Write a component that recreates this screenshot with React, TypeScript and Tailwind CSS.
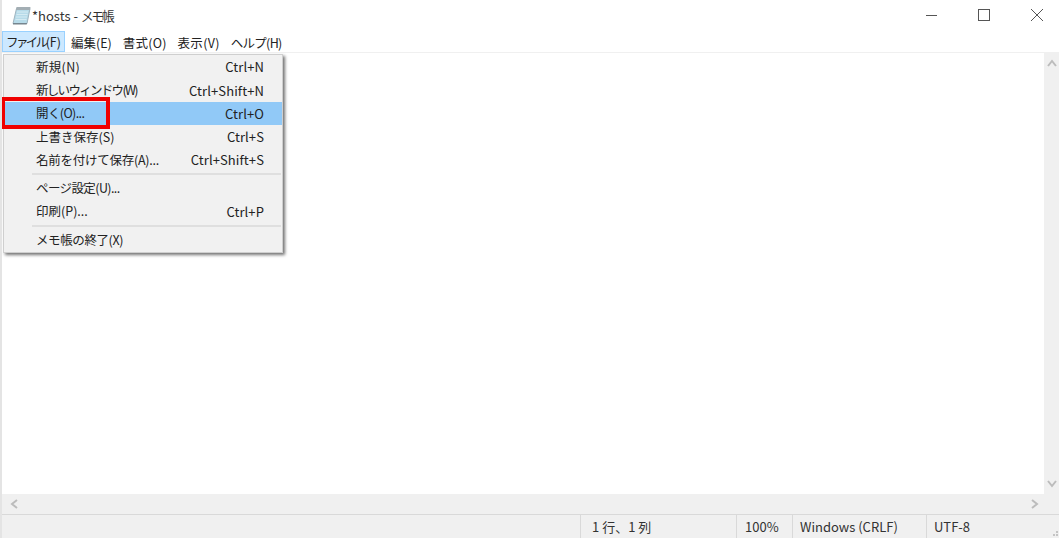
import React from "react";

const FONT = "font-['Noto_Sans_CJK_JP','Noto_Sans',sans-serif]";

function NotepadIcon() {
  return (
    <svg width="19" height="19" viewBox="0 0 19 19" className="shrink-0">
      <path d="M4.5 2.5 L18 2.5 L15 17.5 L1 17.5 Z" fill="#b7dbe9" stroke="#9fb4bf" strokeWidth="1" />
      <path d="M5 6 L16 6 M4.5 8.5 L15.5 8.5 M4 11 L15 11 M3.5 13.5 L14.5 13.5" stroke="#d5ebf3" strokeWidth="1" />
      <path d="M4.5 1 L18.5 1 L18 4 L4 4 Z" fill="#a3aeb4" />
      <path d="M1 17 L15 17 L14.7 18.5 L1 18.5 Z" fill="#76858e" />
    </svg>
  );
}

function Caret({ d }: { d: string }) {
  return (
    <svg width="10" height="8" viewBox="0 0 10 8" className="block">
      <path d={d} fill="none" stroke="#bcbcbc" strokeWidth="2" />
    </svg>
  );
}

function MenuRow({ label, shortcut, active, tracking }: { label: string; shortcut?: string; active?: boolean; tracking?: string }) {
  return (
    <div className={`flex h-[23.25px] items-center justify-between pl-[31px] pr-[18px] ${active ? "bg-[#91c9f7]" : ""}`}>
      <span className={tracking}>{label}</span>
      {shortcut && <span className="text-[13px] tracking-[0.1px]">{shortcut}</span>}
    </div>
  );
}

function Separator() {
  return <div className="my-[1.5px] ml-[27px] mr-[1px] h-[2px] bg-[#dfdfdf]" />;
}

export default function App() {
  return (
    <div className={`${FONT} relative flex h-[538px] w-[1059px] flex-col overflow-hidden border-l-2 border-[#e4e4e4] bg-white text-[12.5px] text-[#222]`}>
      {/* Title bar */}
      <div className="flex h-[31px] shrink-0 items-center justify-between pl-[10px]">
        <div className="flex items-center gap-[1px] text-[13px] text-[#333]">
          <NotepadIcon />
          <span>
            *hosts - <span className="tracking-[-2.6px]">メモ帳</span>
          </span>
        </div>
        <div className="flex items-center gap-[40px] pb-[2px] pr-[15px]">
          <svg width="14" height="14" viewBox="0 0 14 14"><path d="M2 7.5 H13" stroke="#555" /></svg>
          <div className="h-[12px] w-[12px] border border-[#555]" />
          <svg width="14" height="14" viewBox="0 0 14 14"><path d="M1 1 L13 13 M13 1 L1 13" stroke="#555" /></svg>
        </div>
      </div>

      {/* Menu bar */}
      <div className="flex h-[22px] shrink-0 items-center border-b border-[#f0f0f0] text-[12.5px]">
        <div className="flex h-[21px] w-[63px] items-center justify-center whitespace-nowrap border border-[#99d1ff] bg-[#cce8ff] pt-[2px]">
          <span className="tracking-[-2.6px]">ファイル</span>
          <span>(F)</span>
        </div>
        <div className="flex gap-[11px] pl-[6px] pt-[3px]">
          <span>編集(E)</span>
          <span className="tracking-[0.2px]">書式(O)</span>
          <span className="tracking-[0.3px]">表示(V)</span>
          <span className="tracking-[-0.7px]">ヘルプ(H)</span>
        </div>
      </div>

      {/* Edit area */}
      <div className="flex min-h-0 flex-1">
        <div className="flex-1 bg-white" />
        <div className="flex w-[15px] flex-col items-center justify-between bg-[#f0f0f0] py-[6px]">
          <Caret d="M1 7 L5 2 L9 7" />
          <Caret d="M1 1 L5 6 L9 1" />
        </div>
      </div>

      {/* Horizontal scrollbar */}
      <div className="flex h-[20px] shrink-0 items-center justify-between bg-[#f0f0f0] pl-[7px] pr-[19px]">
        <span className="rotate-[-90deg]"><Caret d="M1 7 L5 2 L9 7" /></span>
        <span className="rotate-[-90deg]"><Caret d="M1 1 L5 6 L9 1" /></span>
      </div>

      {/* Status bar */}
      <div className="flex h-[24px] shrink-0 items-center border-t border-[#d9d9d9] bg-[#f0f0f0] text-[13px] text-[#333]">
        <div className="w-[578px]" />
        <div className="flex h-full w-[156px] items-center border-l border-[#d9d9d9] pl-[11px]">1 行、1 列</div>
        <div className="flex h-full w-[56px] items-center border-l border-[#d9d9d9] pl-[8px]">100%</div>
        <div className="flex h-full w-[134px] items-center border-l border-[#d9d9d9] pl-[7px]">Windows (CRLF)</div>
        <div className="flex h-full flex-1 items-center border-l border-[#d9d9d9] pl-[7px]">UTF-8</div>
      </div>

      {/* Resize grip */}
      <svg width="10" height="10" viewBox="0 0 10 10" className="absolute bottom-0 right-0">
        <path d="M7 3 h2 v2 h-2 z M4 6 h2 v2 h-2 z M7 6 h2 v2 h-2 z" fill="#c4c4c4" />
      </svg>

      {/* File menu */}
      <div className="absolute left-[1px] top-[54px] h-[199px] w-[280px] border border-[#cfcfcf] bg-[#f1f1f1] pb-[1px] pl-[1px] pt-[0.5px] shadow-[2px_2px_3px_rgba(0,0,0,0.55)]">
        <MenuRow label="新規(N)" shortcut="Ctrl+N" tracking="tracking-[0.3px]" />
        <MenuRow label="新しいウィンドウ(W)" shortcut="Ctrl+Shift+N" tracking="tracking-[-1.7px]" />
        <MenuRow label="開く(O)..." shortcut="Ctrl+O" active tracking="tracking-[-0.6px]" />
        <MenuRow label="上書き保存(S)" shortcut="Ctrl+S" />
        <MenuRow label="名前を付けて保存(A)..." shortcut="Ctrl+Shift+S" tracking="tracking-[-0.25px]" />
        <Separator />
        <MenuRow label="ページ設定(U)..." tracking="tracking-[-0.6px]" />
        <MenuRow label="印刷(P)..." shortcut="Ctrl+P" />
        <Separator />
        <MenuRow label="メモ帳の終了(X)" tracking="tracking-[-0.4px]" />
      </div>

      {/* Red highlight */}
      <div className="absolute left-[-1px] top-[97px] h-[32px] w-[109px] border-[4px] border-[#f00000]" />
    </div>
  );
}
